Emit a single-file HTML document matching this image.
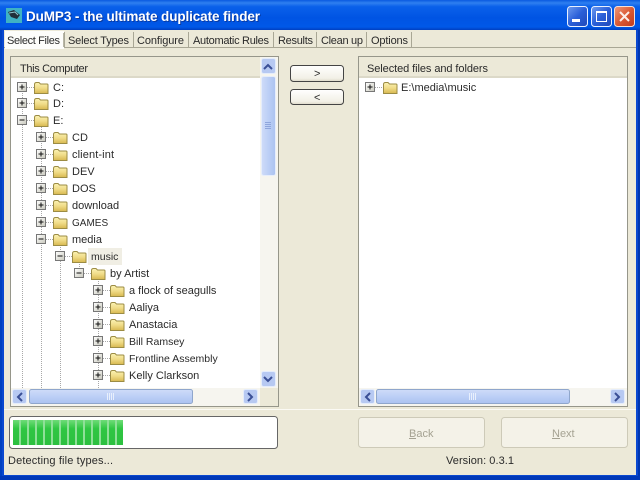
<!DOCTYPE html>
<html><head><meta charset="utf-8"><title>DuMP3</title>
<style>
html,body{margin:0;padding:0;width:640px;height:480px;overflow:hidden;background:#ece9d8}
svg{display:block}
text{font-family:"Liberation Sans",sans-serif;font-size:11px;fill:#2a2a2a}
.dot{stroke:#a8a8a8;stroke-width:1;stroke-dasharray:1 1;fill:none}
</style></head><body>
<svg width="640" height="480" viewBox="0 0 640 480" xmlns="http://www.w3.org/2000/svg">
<defs>
<linearGradient id="tb" x1="0" y1="0" x2="0" y2="1">
<stop offset="0" stop-color="#0a5ae0"/><stop offset=".1" stop-color="#2f80f0"/><stop offset=".22" stop-color="#0a60ea"/><stop offset=".6" stop-color="#0054e3"/><stop offset=".9" stop-color="#0058e8"/><stop offset="1" stop-color="#003fc0"/>
</linearGradient>
<linearGradient id="bl" x1="0" y1="0" x2="1" y2="1"><stop offset="0" stop-color="#6f9cf0"/><stop offset=".5" stop-color="#2a5fd8"/><stop offset="1" stop-color="#2148b8"/></linearGradient>
<linearGradient id="rd" x1="0" y1="0" x2="1" y2="1"><stop offset="0" stop-color="#ee9a7c"/><stop offset=".5" stop-color="#db5a34"/><stop offset="1" stop-color="#c03a1c"/></linearGradient>
<linearGradient id="fo" x1="0" y1="0" x2="0" y2="1"><stop offset="0" stop-color="#fbf3b4"/><stop offset=".5" stop-color="#f0dc88"/><stop offset="1" stop-color="#d8b850"/></linearGradient>
<linearGradient id="bx" x1="0" y1="0" x2="1" y2="1"><stop offset="0" stop-color="#ffffff"/><stop offset="1" stop-color="#c8c8bc"/></linearGradient>
<linearGradient id="btn" x1="0" y1="0" x2="0" y2="1"><stop offset="0" stop-color="#ffffff"/><stop offset=".8" stop-color="#f2f0e6"/><stop offset="1" stop-color="#dcd8c8"/></linearGradient>
<linearGradient id="sv" x1="0" y1="0" x2="1" y2="0"><stop offset="0" stop-color="#cfdcf8"/><stop offset=".5" stop-color="#bccff6"/><stop offset="1" stop-color="#abc2f0"/></linearGradient>
<linearGradient id="sh" x1="0" y1="0" x2="0" y2="1"><stop offset="0" stop-color="#cfdcf8"/><stop offset=".5" stop-color="#bccff6"/><stop offset="1" stop-color="#abc2f0"/></linearGradient>
<linearGradient id="gr" x1="0" y1="0" x2="0" y2="1"><stop offset="0" stop-color="#6fdc78"/><stop offset=".35" stop-color="#2fc642"/><stop offset="1" stop-color="#2cc040"/></linearGradient>
<g id="f"><path d="M.5 3.500 Q.5 1.500 2.500 1.500 H5 L6.500 3 H13 Q14 3 14 4 V12.500 H.5 Z" fill="url(#fo)" stroke="#9c8c44"/></g>
<g id="p"><rect x=".5" y=".5" width="9" height="9" fill="url(#bx)" stroke="#777"/><path d="M2.500 5 H7.500 M5 2.500 V7.500" stroke="#111"/></g>
<g id="m"><rect x=".5" y=".5" width="9" height="9" fill="url(#bx)" stroke="#777"/><path d="M2.500 5 H7.500" stroke="#111"/></g>
<g id="sb"><rect x=".5" y=".5" width="14" height="15" rx="2" fill="#b7c9f2" stroke="#e4ecfb"/></g>
</defs>

<!-- window frame -->
<rect width="640" height="480" fill="#0a48d0"/>
<rect width="640" height="30" fill="url(#tb)"/>
<rect x="0" y="30" width="2" height="450" fill="#0040c0"/>
<rect x="638" y="30" width="2" height="450" fill="#0036b0"/>
<rect x="0" y="476" width="640" height="4" fill="#0038b8"/>
<rect x="4" y="30" width="632" height="445" fill="#ece9d8"/>

<!-- title -->
<rect x="6" y="8" width="16" height="15" fill="#3fb2c4"/>
<path d="M8 12 L14 10 L20 15 L17 19 L11 17 Z" fill="#21303a"/>
<path d="M9 13 L15 12 L18 15" stroke="#8fc8d0" fill="none"/>
<text x="27" y="22" textLength="234" style="font-size:13.500px;font-weight:bold;fill:#0a3aa0">DuMP3 - the ultimate duplicate finder</text>
<text x="26" y="21" textLength="234" style="font-size:13.500px;font-weight:bold;fill:#fff">DuMP3 - the ultimate duplicate finder</text>

<!-- caption buttons -->
<rect x="567.500" y="6.500" width="20" height="20" rx="3" fill="url(#bl)" stroke="#e8f0ff"/>
<rect x="572" y="19" width="8" height="3" fill="#fff"/>
<rect x="591.500" y="6.500" width="20" height="20" rx="3" fill="url(#bl)" stroke="#e8f0ff"/>
<rect x="596.500" y="11.500" width="10" height="10" fill="none" stroke="#fff"/><rect x="596" y="11" width="11" height="2" fill="#fff"/>
<rect x="614.500" y="6.500" width="20" height="20" rx="3" fill="url(#rd)" stroke="#f4e0d8"/>
<path d="M620 12 L629 21 M629 12 L620 21" stroke="#fbeee8" stroke-width="2"/>

<!-- tabs -->
<rect x="4" y="47" width="632" height="1" fill="#a9a795"/>
<path d="M64.500 32 V47 M133.500 32 V47 M188.500 32 V47 M273.500 32 V47 M316.500 32 V47 M366.500 32 V47 M411.500 32 V47" stroke="#a9a795"/>
<rect x="5" y="31" width="59" height="18" fill="#fdfdfb"/>
<path d="M63.500 33 V47" fill="none" stroke="#b8b6a6"/>
<text x="7" y="44" textLength="53">Select Files</text>
<text x="68" y="44" textLength="61">Select Types</text>
<text x="137" y="44" textLength="47">Configure</text>
<text x="193" y="44" textLength="76">Automatic Rules</text>
<text x="278" y="44" textLength="35">Results</text>
<text x="321" y="44" textLength="42">Clean up</text>
<text x="371" y="44" textLength="37">Options</text>

<!-- left panel -->
<rect x="10.500" y="56.500" width="268" height="350" fill="#fff" stroke="#96968a"/>
<rect x="11" y="57" width="249" height="20" fill="#ece9d8"/>
<rect x="11" y="76" width="249" height="2" fill="#dcd9c8"/>
<text x="20" y="72" textLength="68">This Computer</text>

<!-- tree highlight -->
<rect x="88" y="248" width="34" height="17" fill="#f0eee4"/>

<!-- tree lines -->
<path class="dot" d="M22.500 87 V388 M27 87.500 H34 M27 103.500 H34 M27 120.500 H34
M41.500 125 V388 M46 137.500 H53 M46 154.500 H53 M46 171.500 H53 M46 188.500 H53 M46 205.500 H53 M46 222.500 H53 M46 239.500 H53
M60.500 245 V388 M65 256.500 H72
M79.500 262 V273 M84 273.500 H91
M98.500 279 V388 M103 290.500 H110 M103 307.500 H110 M103 324.500 H110 M103 341.500 H110 M103 358.500 H110 M103 375.500 H110"/>

<!-- tree rows -->
<use href="#p" x="17" y="82"/><use href="#f" x="34" y="81"/><text x="53" y="91">C:</text>
<use href="#p" x="17" y="98"/><use href="#f" x="34" y="97"/><text x="53" y="107">D:</text>
<use href="#m" x="17" y="115"/><use href="#f" x="34" y="114"/><text x="53" y="124">E:</text>
<use href="#p" x="36" y="132"/><use href="#f" x="53" y="131"/><text x="72" y="141">CD</text>
<use href="#p" x="36" y="149"/><use href="#f" x="53" y="148"/><text x="72" y="158" textLength="42">client-int</text>
<use href="#p" x="36" y="166"/><use href="#f" x="53" y="165"/><text x="72" y="175">DEV</text>
<use href="#p" x="36" y="183"/><use href="#f" x="53" y="182"/><text x="72" y="192">DOS</text>
<use href="#p" x="36" y="200"/><use href="#f" x="53" y="199"/><text x="72" y="209">download</text>
<use href="#p" x="36" y="217"/><use href="#f" x="53" y="216"/><text x="72" y="226" style="font-size:10px">GAMES</text>
<use href="#m" x="36" y="234"/><use href="#f" x="53" y="233"/><text x="72" y="243">media</text>
<use href="#m" x="55" y="251"/><use href="#f" x="72" y="250"/><text x="91" y="260" style="font-size:10.500px">music</text>
<use href="#m" x="74" y="268"/><use href="#f" x="91" y="267"/><text x="110" y="277">by Artist</text>
<use href="#p" x="93" y="285"/><use href="#f" x="110" y="284"/><text x="129" y="294">a flock of seagulls</text>
<use href="#p" x="93" y="302"/><use href="#f" x="110" y="301"/><text x="129" y="311">Aaliya</text>
<use href="#p" x="93" y="319"/><use href="#f" x="110" y="318"/><text x="129" y="328">Anastacia</text>
<use href="#p" x="93" y="336"/><use href="#f" x="110" y="335"/><text x="129" y="345" style="font-size:10.500px">Bill Ramsey</text>
<use href="#p" x="93" y="353"/><use href="#f" x="110" y="352"/><text x="129" y="362" style="font-size:10.500px">Frontline Assembly</text>
<use href="#p" x="93" y="370"/><use href="#f" x="110" y="369"/><text x="129" y="379">Kelly Clarkson</text>

<!-- left vertical scrollbar -->
<rect x="260" y="57" width="18" height="349" fill="#f6f5ef"/>
<use href="#sb" x="261" y="58"/>
<path d="M264 69 L268 65 L272 69" stroke="#3a4f96" stroke-width="2" fill="none"/>
<rect x="261.500" y="76.500" width="14" height="99" rx="2" fill="url(#sv)" stroke="#e6edfb"/>
<path d="M265 122.500 H271 M265 124.500 H271 M265 126.500 H271 M265 128.500 H271" stroke="#8fa6dc"/>
<use href="#sb" x="261" y="371"/>
<path d="M264 377 L268 381 L272 377" stroke="#3a4f96" stroke-width="2" fill="none"/>

<!-- left horizontal scrollbar -->
<rect x="11" y="388" width="249" height="18" fill="#f6f5ef"/>
<rect x="260" y="388" width="18" height="18" fill="#ece9d8"/>
<rect x="12.500" y="389.500" width="14" height="14" rx="2" fill="#b7c9f2" stroke="#e4ecfb"/>
<path d="M22 393 L18 397 L22 401" stroke="#3a4f96" stroke-width="2" fill="none"/>
<rect x="29.500" y="389.500" width="163" height="14" rx="2" fill="url(#sh)" stroke="#8fa6cc"/>
<path d="M107.500 393 V400 M109.500 393 V400 M111.500 393 V400 M113.500 393 V400" stroke="#e8effc"/>
<rect x="243.500" y="389.500" width="14" height="14" rx="2" fill="#b7c9f2" stroke="#e4ecfb"/>
<path d="M248 393 L252 397 L248 401" stroke="#3a4f96" stroke-width="2" fill="none"/>

<!-- move buttons -->
<rect x="290.500" y="65.500" width="53" height="16" rx="3" fill="url(#btn)" stroke="#444"/>
<text x="314" y="77">&gt;</text>
<rect x="290.500" y="89.500" width="53" height="15" rx="3" fill="url(#btn)" stroke="#444"/>
<text x="314" y="101">&lt;</text>

<!-- right panel -->
<rect x="358.500" y="56.500" width="269" height="350" fill="#fff" stroke="#96968a"/>
<rect x="359" y="57" width="268" height="20" fill="#ece9d8"/>
<rect x="359" y="76" width="268" height="2" fill="#dcd9c8"/>
<text x="367" y="72" textLength="121">Selected files and folders</text>
<path class="dot" d="M375 87.500 H382"/>
<use href="#p" x="365" y="82"/><use href="#f" x="383" y="81"/><text x="401" y="91">E:\media\music</text>
<rect x="359" y="388" width="268" height="18" fill="#f6f5ef"/>
<rect x="360.500" y="389.500" width="14" height="14" rx="2" fill="#b7c9f2" stroke="#e4ecfb"/>
<path d="M370 393 L366 397 L370 401" stroke="#3a4f96" stroke-width="2" fill="none"/>
<rect x="376.500" y="389.500" width="193" height="14" rx="2" fill="url(#sh)" stroke="#8fa6cc"/>
<path d="M469.500 393 V400 M471.500 393 V400 M473.500 393 V400 M475.500 393 V400" stroke="#e8effc"/>
<rect x="610.500" y="389.500" width="14" height="14" rx="2" fill="#b7c9f2" stroke="#e4ecfb"/>
<path d="M615 393 L619 397 L615 401" stroke="#3a4f96" stroke-width="2" fill="none"/>

<!-- separator -->
<rect x="4" y="409" width="632" height="1" fill="#fbfaf4"/>

<!-- progress -->
<rect x="9.500" y="416.500" width="268" height="32" rx="3" fill="#fff" stroke="#666"/>
<rect x="13" y="420" width="110" height="25" fill="#8fe098"/>
<g fill="url(#gr)">
<rect x="13" y="420" width="6" height="25"/><rect x="21" y="420" width="6" height="25"/><rect x="29" y="420" width="6" height="25"/><rect x="37" y="420" width="6" height="25"/><rect x="45" y="420" width="6" height="25"/><rect x="53" y="420" width="6" height="25"/><rect x="61" y="420" width="6" height="25"/><rect x="69" y="420" width="6" height="25"/><rect x="77" y="420" width="6" height="25"/><rect x="85" y="420" width="6" height="25"/><rect x="93" y="420" width="6" height="25"/><rect x="101" y="420" width="6" height="25"/><rect x="109" y="420" width="6" height="25"/><rect x="117" y="420" width="6" height="25"/>
</g>

<!-- wizard buttons -->
<rect x="358.500" y="417.500" width="126" height="30" rx="3" fill="#f4f2e8" stroke="#cdcab8"/>
<text x="409" y="437" style="fill:#a5a292">Back</text><path d="M409 438.500 H416" stroke="#a5a292"/>
<rect x="501.500" y="417.500" width="126" height="30" rx="3" fill="#f4f2e8" stroke="#cdcab8"/>
<text x="552" y="437" style="fill:#a5a292">Next</text><path d="M552 438.500 H560" stroke="#a5a292"/>

<!-- status -->
<text x="8" y="464" textLength="105">Detecting file types...</text>
<text x="446" y="464" textLength="68">Version: 0.3.1</text>
</svg>
</body></html>
